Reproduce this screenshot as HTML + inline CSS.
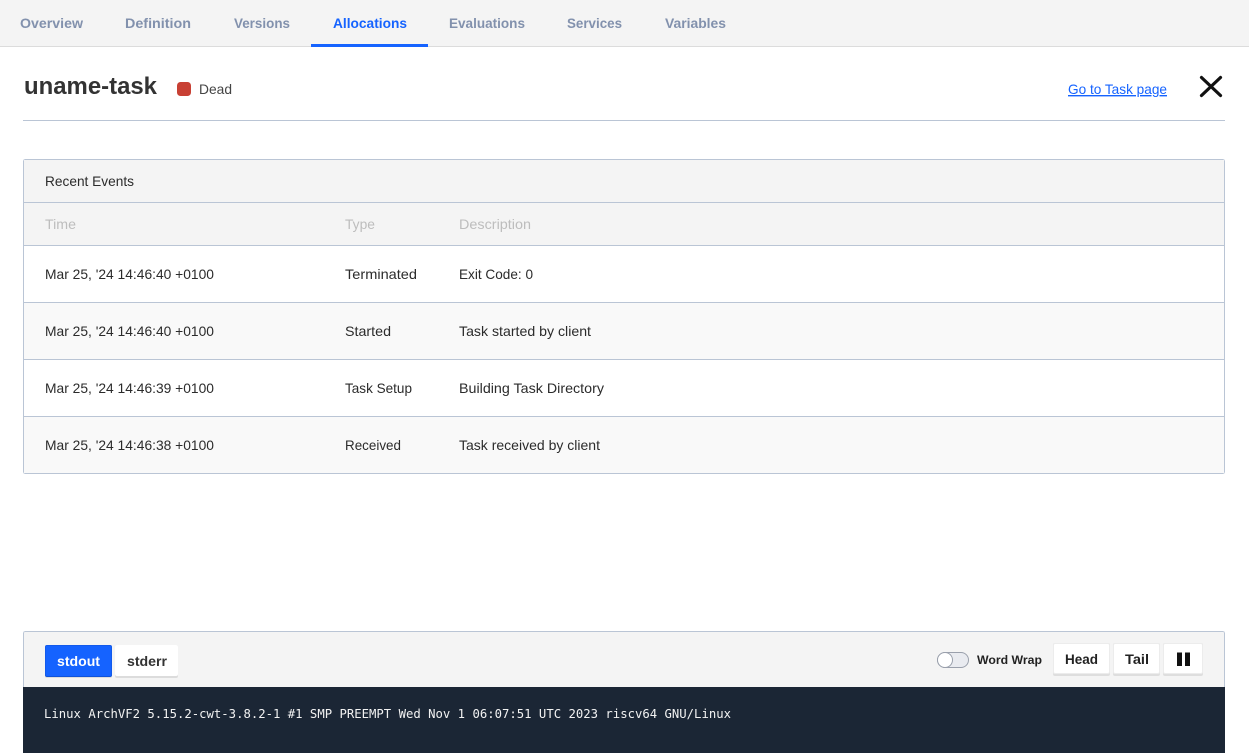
<!DOCTYPE html>
<html><head><meta charset="utf-8"><style>
html,body{margin:0;padding:0;width:1249px;height:753px;overflow:hidden;background:#fff}
svg{position:absolute;left:0;top:0}
text{font-family:"Liberation Sans",sans-serif;font-size:14px;white-space:pre}
.n{font-weight:bold;fill:#8291ad}
.r{fill:#2b2b2b}
.h{fill:#bdbdbd}
.b{font-weight:bold}
</style></head><body>
<svg width="1249" height="753" viewBox="0 0 1249 753" xmlns="http://www.w3.org/2000/svg" shape-rendering="crispEdges">
<rect x="0" y="0" width="1249" height="46" fill="#f4f4f4"/>
<rect x="0" y="46" width="1249" height="1" fill="#dcdcdc"/>
<rect x="311" y="44" width="117" height="3" fill="#1563ff"/>
<rect x="23" y="120" width="1202" height="1" fill="#bac5d5"/>

<rect x="23.5" y="159.5" width="1201" height="314" rx="2" fill="#fff" stroke="#bac5d5"/>
<rect x="24" y="160" width="1200" height="85" fill="#f4f4f4"/>
<rect x="24" y="303" width="1200" height="56" fill="#f9f9f9"/>
<rect x="24" y="417" width="1200" height="56" fill="#f9f9f9"/>
<rect x="24" y="202" width="1200" height="1" fill="#bac5d5"/>
<rect x="24" y="245" width="1200" height="1" fill="#bac5d5"/>
<rect x="24" y="302" width="1200" height="1" fill="#bac5d5"/>
<rect x="24" y="359" width="1200" height="1" fill="#bac5d5"/>
<rect x="24" y="416" width="1200" height="1" fill="#bac5d5"/>

<rect x="23.5" y="631.5" width="1201" height="130" rx="2" fill="#f4f4f4" stroke="#bac5d5"/>
<rect x="23" y="687" width="1202" height="66" fill="#1b2635"/>

<g shape-rendering="geometricPrecision">
<rect x="45" y="646" width="67" height="32" rx="2" fill="#dcdcdc"/>
<rect x="45" y="645" width="67" height="32" rx="2" fill="#0f52d8"/>
<rect x="45.500" y="645.500" width="66" height="30.500" rx="1.500" fill="#1563ff"/>
<rect x="115" y="645" width="63" height="33" rx="2" fill="#dcdcdc"/>
<rect x="115" y="645" width="63" height="31" rx="2" fill="#fff"/>

<rect x="1053" y="643" width="57" height="33" rx="2" fill="#dedede"/>
<rect x="1053.500" y="643.500" width="56" height="30" rx="1.500" fill="#fff" stroke="#ececec"/>
<rect x="1113" y="643" width="47" height="33" rx="2" fill="#dedede"/>
<rect x="1113.500" y="643.500" width="46" height="30" rx="1.500" fill="#fff" stroke="#ececec"/>
<rect x="1163" y="643" width="40" height="33" rx="2" fill="#dedede"/>
<rect x="1163.500" y="643.500" width="39" height="30" rx="1.500" fill="#fff" stroke="#ececec"/>
<rect x="1177" y="652.500" width="5" height="13.500" fill="#111"/>
<rect x="1185" y="652.500" width="5" height="13.500" fill="#111"/>

<rect x="177" y="82" width="14" height="14" rx="3.500" fill="#c84034"/>
<path d="M1201.500 77.500L1220.500 95.500M1220.500 77.500L1201.500 95.500" stroke="#111" stroke-width="3.200" stroke-linecap="round" fill="none"/>
<rect x="937.500" y="652.500" width="31" height="15" rx="7.500" fill="#e9ebf0" stroke="#9aa0ac"/>
<circle cx="945" cy="660" r="7.500" fill="#fff" stroke="#9aa0ac"/>

<text class="n" x="20" y="28" textLength="63" lengthAdjust="spacingAndGlyphs">Overview</text>
<text class="n" x="125" y="28" textLength="66" lengthAdjust="spacingAndGlyphs">Definition</text>
<text class="n" x="234" y="28" textLength="56" lengthAdjust="spacingAndGlyphs">Versions</text>
<text class="b" x="333" y="28" textLength="74" lengthAdjust="spacingAndGlyphs" fill="#1563ff">Allocations</text>
<text class="n" x="449" y="28" textLength="76" lengthAdjust="spacingAndGlyphs">Evaluations</text>
<text class="n" x="567" y="28" textLength="55" lengthAdjust="spacingAndGlyphs">Services</text>
<text class="n" x="665" y="28" textLength="61" lengthAdjust="spacingAndGlyphs">Variables</text>

<text class="b" x="24" y="94" textLength="133" lengthAdjust="spacingAndGlyphs" style="font-size:24px" fill="#333">uname-task</text>
<text x="199" y="94" textLength="33" lengthAdjust="spacingAndGlyphs" fill="#444">Dead</text>
<text x="1068" y="94" textLength="99" lengthAdjust="spacingAndGlyphs" fill="#1563ff" text-decoration="underline">Go to Task page</text>

<text class="r" x="45" y="186" textLength="89" lengthAdjust="spacingAndGlyphs">Recent Events</text>
<text class="h" x="45" y="229" textLength="31" lengthAdjust="spacingAndGlyphs">Time</text>
<text class="h" x="345" y="229" textLength="30" lengthAdjust="spacingAndGlyphs">Type</text>
<text class="h" x="459" y="229" textLength="72" lengthAdjust="spacingAndGlyphs">Description</text>

<text class="r" x="45" y="279" textLength="169" lengthAdjust="spacingAndGlyphs">Mar 25, '24 14:46:40 +0100</text>
<text class="r" x="345" y="279" textLength="72" lengthAdjust="spacingAndGlyphs">Terminated</text>
<text class="r" x="459" y="279" textLength="74" lengthAdjust="spacingAndGlyphs">Exit Code: 0</text>

<text class="r" x="45" y="336" textLength="169" lengthAdjust="spacingAndGlyphs">Mar 25, '24 14:46:40 +0100</text>
<text class="r" x="345" y="336" textLength="46" lengthAdjust="spacingAndGlyphs">Started</text>
<text class="r" x="459" y="336" textLength="132" lengthAdjust="spacingAndGlyphs">Task started by client</text>

<text class="r" x="45" y="393" textLength="169" lengthAdjust="spacingAndGlyphs">Mar 25, '24 14:46:39 +0100</text>
<text class="r" x="345" y="393" textLength="67" lengthAdjust="spacingAndGlyphs">Task Setup</text>
<text class="r" x="459" y="393" textLength="145" lengthAdjust="spacingAndGlyphs">Building Task Directory</text>

<text class="r" x="45" y="450" textLength="169" lengthAdjust="spacingAndGlyphs">Mar 25, '24 14:46:38 +0100</text>
<text class="r" x="345" y="450" textLength="56" lengthAdjust="spacingAndGlyphs">Received</text>
<text class="r" x="459" y="450" textLength="141" lengthAdjust="spacingAndGlyphs">Task received by client</text>

<text class="b" x="57" y="666" textLength="43" lengthAdjust="spacingAndGlyphs" fill="#fff">stdout</text>
<text class="b" x="127" y="666" textLength="40" lengthAdjust="spacingAndGlyphs" fill="#333">stderr</text>
<text class="b" x="977" y="664" textLength="65" lengthAdjust="spacingAndGlyphs" style="font-size:12px" fill="#222">Word Wrap</text>
<text class="b" x="1065" y="664" textLength="33" lengthAdjust="spacingAndGlyphs" fill="#222">Head</text>
<text class="b" x="1125" y="664" textLength="24" lengthAdjust="spacingAndGlyphs" fill="#222">Tail</text>

<text x="44" y="718" textLength="687" lengthAdjust="spacingAndGlyphs" style="font-family:'DejaVu Sans Mono','Liberation Mono',monospace;font-size:12.25px" fill="#f2f2f2">Linux ArchVF2 5.15.2-cwt-3.8.2-1 #1 SMP PREEMPT Wed Nov 1 06:07:51 UTC 2023 riscv64 GNU/Linux</text>
</g>
</svg>
</body></html>
